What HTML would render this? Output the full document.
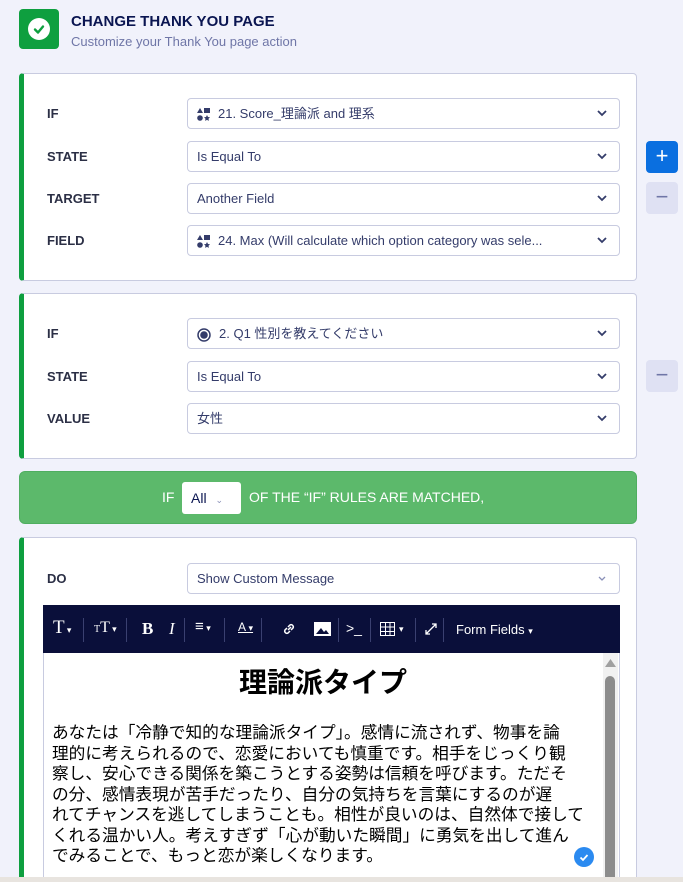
<!DOCTYPE html>
<html style="width:683px;height:882px;overflow:hidden"><head><meta charset="utf-8"><style>
*{box-sizing:border-box;margin:0;padding:0}
body{width:683px;height:882px;overflow:hidden;background:#f1f2fb;font-family:"Liberation Sans","Noto Sans CJK JP",sans-serif;color:#0a1551;position:relative}
.abs{position:absolute}
.card{position:absolute;left:19px;width:618px;background:#fff;border:1px solid #c8cbe0;border-left:5px solid #0e9f3f;border-radius:4px}
.lbl{position:absolute;left:47px;font-size:13px;font-weight:bold;color:#2b2f45}
.sel{position:absolute;left:187px;width:433px;height:31px;border:1px solid #c8cbe0;border-radius:4px;background:#fff;font-size:13px;color:#343c6a;padding-left:9px;line-height:29px;white-space:nowrap;overflow:hidden}
.sel .ic{display:inline-block;vertical-align:middle;margin-right:8px}
.chev{position:absolute;right:12px;top:10px;width:10px;height:8px}
.btn{position:absolute;left:646px;width:32px;height:32px;border-radius:4px;background:#dfe1f3;color:#6f76a7;text-align:center;line-height:30px;font-size:22px}
.tb{position:absolute;top:605px;left:43px;width:577px;height:48px;background:#0a0f3a;color:#fff}
.tb span{position:absolute;top:14px;font-size:16px}
.sep{position:absolute;top:13px;width:1px;height:24px;background:#3a4070}
</style></head><body>
<div class="abs" style="left:19px;top:9px;width:40px;height:40px;background:#0e9f3f;border-radius:4px"></div>
<div class="abs" style="left:28px;top:18px;width:22px;height:22px;background:#fff;border-radius:50%"></div>
<svg class="abs" style="left:28px;top:18px" width="22" height="22"><path d="M7 11.5l3 3 5-6" stroke="#0e9f3f" stroke-width="2.4" fill="none" stroke-linecap="round" stroke-linejoin="round"/></svg>
<div class="abs" style="left:71px;top:13px;font-size:15px;font-weight:bold;color:#0a1551">CHANGE THANK YOU PAGE</div>
<div class="abs" style="left:71px;top:34px;font-size:13px;color:#6f76a7">Customize your Thank You page action</div>

<div class="card" style="top:73px;height:208px"></div>
<div class="lbl" style="top:106px">IF</div>
<div class="lbl" style="top:149px">STATE</div>
<div class="lbl" style="top:191px">TARGET</div>
<div class="lbl" style="top:233px">FIELD</div>
<div class="sel" style="top:98px"><svg class="ic" width="13" height="13"><path d="M3 0L6 5H0z" fill="#343c6a"/><rect x="7" y="0" width="6" height="5" fill="#343c6a"/><circle cx="3" cy="10" r="2.8" fill="#343c6a"/><path d="M10 7l1 2 2 .3-1.5 1.4.4 2.2-1.9-1-1.9 1 .4-2.2L7 9.3 9 9z" fill="#343c6a"/></svg>21. Score_理論派 and 理系<svg class="chev" viewBox="0 0 10 8"><path d="M1 2l4 4 4-4" stroke="#343c6a" stroke-width="1.8" fill="none"/></svg></div>
<div class="sel" style="top:141px">Is Equal To<svg class="chev" viewBox="0 0 10 8"><path d="M1 2l4 4 4-4" stroke="#343c6a" stroke-width="1.8" fill="none"/></svg></div>
<div class="sel" style="top:183px">Another Field<svg class="chev" viewBox="0 0 10 8"><path d="M1 2l4 4 4-4" stroke="#343c6a" stroke-width="1.8" fill="none"/></svg></div>
<div class="sel" style="top:225px"><svg class="ic" width="13" height="13"><path d="M3 0L6 5H0z" fill="#343c6a"/><rect x="7" y="0" width="6" height="5" fill="#343c6a"/><circle cx="3" cy="10" r="2.8" fill="#343c6a"/><path d="M10 7l1 2 2 .3-1.5 1.4.4 2.2-1.9-1-1.9 1 .4-2.2L7 9.3 9 9z" fill="#343c6a"/></svg>24. Max (Will calculate which option category was sele...<svg class="chev" viewBox="0 0 10 8"><path d="M1 2l4 4 4-4" stroke="#343c6a" stroke-width="1.8" fill="none"/></svg></div>
<div class="btn" style="top:141px;background:#0a6fe0;color:#fff">+</div>
<div class="btn" style="top:182px">−</div>

<div class="card" style="top:293px;height:166px"></div>
<div class="lbl" style="top:326px">IF</div>
<div class="lbl" style="top:369px">STATE</div>
<div class="lbl" style="top:411px">VALUE</div>
<div class="sel" style="top:318px"><svg class="ic" width="14" height="14"><circle cx="7" cy="7" r="6" stroke="#343c6a" stroke-width="1.5" fill="none"/><circle cx="7" cy="7" r="3.8" fill="#343c6a"/></svg>2. Q1 性別を教えてください<svg class="chev" viewBox="0 0 10 8"><path d="M1 2l4 4 4-4" stroke="#343c6a" stroke-width="1.8" fill="none"/></svg></div>
<div class="sel" style="top:361px">Is Equal To<svg class="chev" viewBox="0 0 10 8"><path d="M1 2l4 4 4-4" stroke="#343c6a" stroke-width="1.8" fill="none"/></svg></div>
<div class="sel" style="top:403px">女性<svg class="chev" viewBox="0 0 10 8"><path d="M1 2l4 4 4-4" stroke="#343c6a" stroke-width="1.8" fill="none"/></svg></div>
<div class="btn" style="top:360px">−</div>

<div class="abs" style="left:19px;top:471px;width:618px;height:53px;background:#5cb96b;border-radius:6px;border:1px solid #4fae60"></div>
<div class="abs" style="left:162px;top:489px;font-size:14px;color:#fff">IF</div>
<div class="abs" style="left:182px;top:482px;width:59px;height:32px;background:#fff;border-radius:3px;font-size:14px;color:#0a1551;padding-left:9px;line-height:32px">All <span style="font-size:9px;color:#8a90b8;margin-left:5px">⌄</span></div>
<div class="abs" style="left:249px;top:489px;font-size:14px;color:#fff">OF THE “IF” RULES ARE MATCHED,</div>

<div class="card" style="top:537px;height:345px;border-bottom:none;border-radius:4px 4px 0 0"></div>
<div class="lbl" style="top:571px">DO</div>
<div class="sel" style="top:563px">Show Custom Message<svg class="chev" viewBox="0 0 10 8"><path d="M2 3l3 3 3-3" stroke="#8a90b8" stroke-width="1.3" fill="none"/></svg></div>

<div class="abs" style="left:43px;top:605px;width:577px;height:277px;background:#fff;border:1px solid #c8cbe0;border-bottom:none"></div>
<div class="tb">
<span style="left:10px;font-family:'Liberation Serif',serif;font-size:19px;top:12px">T<small style="font-size:9px"> ▾</small></span>
<div class="sep" style="left:40px"></div>
<span style="left:51px;font-family:'Liberation Serif',serif;font-size:16px"><small style="font-size:10px">T</small>T<small style="font-size:9px"> ▾</small></span>
<div class="sep" style="left:83px"></div>
<span style="left:99px;font-family:'Liberation Serif',serif;font-weight:bold;font-size:17px">B</span>
<span style="left:126px;font-family:'Liberation Serif',serif;font-style:italic;font-size:17px">I</span>
<div class="sep" style="left:141px"></div>
<span style="left:152px;font-size:15px;top:13px">≡<small style="font-size:9px"> ▾</small></span>
<div class="sep" style="left:181px"></div>
<span style="left:195px;font-size:12px;top:15px;text-decoration:underline">A<small style="font-size:9px"> ▾</small></span>
<div class="sep" style="left:218px"></div>
<svg class="abs" style="left:238px;top:16px" width="16" height="16"><path d="M7 9l3-3M6 7L4 9a2.2 2.2 0 003 3l2-2M10 9l2-2a2.2 2.2 0 00-3-3L7 6" stroke="#fff" stroke-width="1.5" fill="none"/></svg>
<svg class="abs" style="left:271px;top:17px" width="17" height="14"><rect width="17" height="14" fill="#fff"/><path d="M2 12l5-6 3 4 2-2 3 4z" fill="#0a0f3a"/></svg>
<div class="sep" style="left:295px"></div>
<span style="left:303px;font-size:14px;top:15px">&gt;_</span>
<div class="sep" style="left:327px"></div>
<svg class="abs" style="left:337px;top:17px" width="15" height="14"><path d="M.5.5h14v13H.5zM5.5.5v13M10 .5v13M.5 5h14M.5 9.5h14" stroke="#fff" fill="none"/></svg>
<span style="left:356px;font-size:9px;top:19px">▾</span>
<div class="sep" style="left:372px"></div>
<svg class="abs" style="left:381px;top:17px" width="14" height="14"><path d="M2 12l10-10M8 2h4v4M2 8v4h4" stroke="#fff" stroke-width="1.3" fill="none"/></svg>
<div class="sep" style="left:400px"></div>
<span style="left:413px;font-size:13px;top:17px">Form Fields <small style="font-size:9px">▾</small></span>
</div>
<div class="abs" style="left:603px;top:653px;width:15px;height:229px;background:#f1f1f1"></div>
<svg class="abs" style="left:603px;top:657px" width="15" height="12"><path d="M2 10L7.5 2 13 10z" fill="#a0a0a0"/></svg>
<div class="abs" style="left:605px;top:676px;width:10px;height:206px;background:#8c8c8c;border-radius:5px 5px 0 0"></div>
<div class="abs" style="left:44px;top:661px;width:558px;text-align:center;font-size:28px;font-weight:bold;color:#000">理論派タイプ</div>
<div class="abs" style="left:52px;top:723px;width:560px;font-size:16.7px;line-height:20.5px;color:#000;white-space:nowrap;letter-spacing:0">あなたは「冷静で知的な理論派タイプ」。感情に流されず、物事を論<br>理的に考えられるので、恋愛においても慎重です。相手をじっくり観<br>察し、安心できる関係を築こうとする姿勢は信頼を呼びます。ただそ<br>の分、感情表現が苦手だったり、自分の気持ちを言葉にするのが遅<br>れてチャンスを逃してしまうことも。相性が良いのは、自然体で接して<br>くれる温かい人。考えすぎず「心が動いた瞬間」に勇気を出して進ん<br>でみることで、もっと恋が楽しくなります。</div>
<div class="abs" style="left:574px;top:847px;width:20px;height:20px;border-radius:50%;background:#2b8af0"></div>
<svg class="abs" style="left:574px;top:847px" width="20" height="20"><path d="M6.5 10.5l2.5 2.5 4.5-5" stroke="#fff" stroke-width="1.8" fill="none"/></svg>
<div class="abs" style="left:0;top:877px;width:683px;height:5px;background:#e8e4df"></div>
</body></html>
